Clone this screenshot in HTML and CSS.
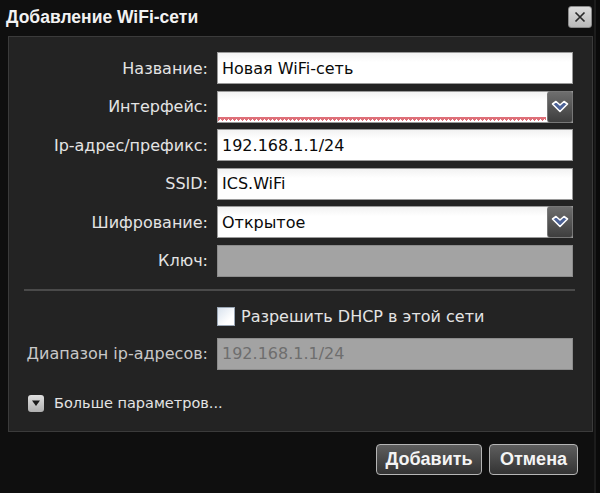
FILE: index.html
```html
<!DOCTYPE html>
<html lang="ru">
<head>
<meta charset="utf-8">
<title>Добавление WiFi-сети</title>
<link rel="stylesheet" href="styles.css">
</head>
<body>
<div class="dialog">
  <div class="titlebar">
    <div class="title">Добавление WiFi-сети</div>
    <div class="close">
      <svg width="14" height="14" viewBox="0 0 14 14"><path d="M2.5 2.5 L11.5 11.5 M11.5 2.5 L2.5 11.5" stroke="#2a2a2a" stroke-width="1.7" fill="none"/></svg>
    </div>
  </div>
  <div class="panel">
    <div class="form">
      <label class="lbl">Название:</label>
      <div class="field"><span class="val">Новая WiFi-сеть</span></div>

      <label class="lbl">Интерфейс:</label>
      <div class="field select"><span class="val"></span><span class="squiggle"></span>
        <span class="arrow"><svg width="20" height="16" viewBox="0 0 20 16"><path d="M2.5 5 L6 2.5 L10 6 L14 2.5 L17.5 5 L10 12.5 Z" fill="#4d6398" stroke="#ffffff" stroke-width="1.6" stroke-linejoin="round"/></svg></span>
      </div>

      <label class="lbl">Ip-адрес/префикс:</label>
      <div class="field"><span class="val">192.168.1.1/24</span></div>

      <label class="lbl">SSID:</label>
      <div class="field"><span class="val">ICS.WiFi</span></div>

      <label class="lbl">Шифрование:</label>
      <div class="field select"><span class="val">Открытое</span>
        <span class="arrow"><svg width="20" height="16" viewBox="0 0 20 16"><path d="M2.5 5 L6 2.5 L10 6 L14 2.5 L17.5 5 L10 12.5 Z" fill="#4d6398" stroke="#ffffff" stroke-width="1.6" stroke-linejoin="round"/></svg></span>
      </div>

      <label class="lbl">Ключ:</label>
      <div class="field disabled"></div>
    </div>

    <div class="separator"></div>

    <div class="form form2">
      <div></div>
      <div class="check-row"><span class="checkbox"></span><span class="check-text">Разрешить DHCP в этой сети</span></div>

      <label class="lbl dim">Диапазон ip-адресов:</label>
      <div class="field disabled"><span class="val grey">192.168.1.1/24</span></div>
    </div>

    <div class="more">
      <span class="more-icon"><svg width="10" height="8" viewBox="0 0 10 8"><path d="M1 1.5 L9 1.5 L5 7 Z" fill="#1a1a1a"/></svg></span>
      <span class="more-text">Больше параметров...</span>
    </div>
  </div>
  <div class="buttons">
    <button class="btn">Добавить</button>
    <button class="btn">Отмена</button>
  </div>
</div>
</body>
</html>
```

FILE: styles.css
```css
html, body {
  margin: 0;
  padding: 0;
  background: #0e0e0e;
}
body {
  width: 600px;
  height: 493px;
  overflow: hidden;
  font-family: "DejaVu Sans", Verdana, sans-serif;
}
.dialog {
  width: 600px;
  height: 493px;
  background: linear-gradient(to right, #0f0f0f 0, #0f0f0f 594px, #1c1c1c 594px, #1c1c1c 596px, #0a0a0a 596px);
}
.titlebar {
  height: 36px;
  display: flex;
  align-items: flex-start;
  justify-content: space-between;
  padding: 0 8px 0 6px;
  box-sizing: border-box;
}
.title {
  font-family: "Liberation Sans", Arial, sans-serif;
  font-weight: bold;
  font-size: 17.5px;
  color: #f2f2f2;
  margin-top: 7px;
}
.close {
  width: 24px;
  height: 22px;
  margin-top: 6px;
  background: linear-gradient(#dcdcdc, #bababa);
  border: 1px solid #8a8a8a;
  border-radius: 3px;
  box-sizing: border-box;
  display: flex;
  align-items: center;
  justify-content: center;
}
.panel {
  margin: 0 7px 0 8px;
  height: 396px;
  box-sizing: border-box;
  border: 1px solid #3b3b3b;
  background: #232323;
  padding: 15px 19px 0 0;
}
.form {
  display: grid;
  grid-template-columns: 199px 356px;
  column-gap: 9px;
  row-gap: 6.6px;
  grid-auto-rows: 32px;
}
.lbl {
  color: #e4e4e4;
  font-size: 16px;
  text-align: right;
  align-self: center;
  white-space: nowrap;
}
.lbl.dim {
  color: #c8c8c8;
}
.field {
  position: relative;
  background: linear-gradient(#f2f2f2, #ffffff 30%);
  border: 1px solid #9a9a9a;
  box-sizing: border-box;
  display: flex;
  align-items: center;
  padding-left: 4px;
}
.val {
  font-size: 16px;
  color: #0a0a0a;
}
.val.grey {
  color: #6e6e6e;
}
.field.disabled {
  background: #a3a3a3;
  border-color: #8c8c8c;
}
.select {
  padding-right: 26px;
}
.arrow {
  position: absolute;
  right: -1px;
  top: -1px;
  bottom: -1px;
  width: 26px;
  background: linear-gradient(#6e6e6e, #3e3e3e);
  border: 1px solid #777;
  border-radius: 3px;
  box-sizing: border-box;
  display: flex;
  align-items: center;
  justify-content: center;
}
.squiggle {
  position: absolute;
  left: 0;
  right: 26px;
  bottom: 1px;
  height: 4px;
  background-image:
    linear-gradient(45deg, transparent 50%, #de6f78 50%, #de6f78 92%, transparent 92%),
    linear-gradient(-45deg, transparent 50%, #de6f78 50%, #de6f78 92%, transparent 92%);
  background-size: 4px 4px;
}
.separator {
  height: 2px;
  background: #4a4a4a;
  margin: 12px 0 0 15px;
  width: 551px;
}
.form2 {
  margin-top: 16px;
  grid-template-rows: 19px 32px;
  row-gap: 12px;
}
.check-row {
  display: flex;
  align-items: center;
  gap: 6px;
}
.checkbox {
  width: 18px;
  height: 19px;
  box-sizing: border-box;
  border: 1px solid #9aa6b4;
  background: linear-gradient(135deg, #d9e3ee, #ffffff 70%);
}
.check-text {
  color: #e4e4e4;
  font-size: 16px;
}
.more {
  display: flex;
  align-items: center;
  gap: 10px;
  margin: 25px 0 0 19px;
}
.more-icon {
  width: 16px;
  height: 17px;
  background: linear-gradient(#e0e0e0, #b0b0b0);
  border-radius: 3px;
  display: flex;
  align-items: center;
  justify-content: center;
}
.more-text {
  color: #e4e4e4;
  font-size: 14.5px;
}
.buttons {
  display: flex;
  justify-content: flex-end;
  gap: 7px;
  padding: 12px 22px 0 0;
}
.btn {
  height: 31px;
  padding: 0 6px;
  font-family: "Liberation Sans", Arial, sans-serif;
  font-weight: bold;
  font-size: 18px;
  color: #f4f4f4;
  background: linear-gradient(#5e5e5e, #333333);
  border: 1px solid #b5b5b5;
  border-radius: 4px;
}
.btn:first-child {
  width: 106px;
}
.btn:last-child {
  width: 89px;
}
```
